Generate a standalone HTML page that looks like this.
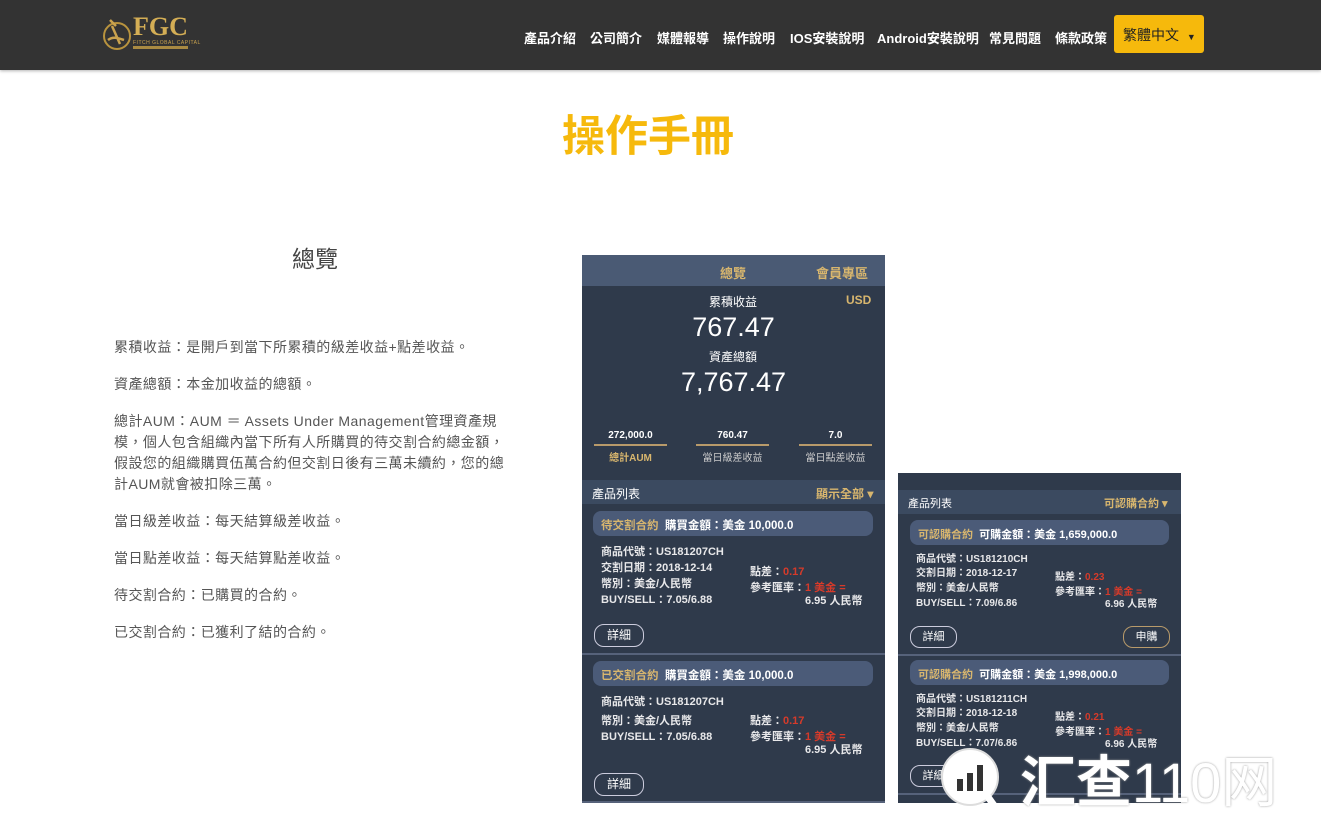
<!DOCTYPE html>
<html><head><meta charset="utf-8"><style>
*{margin:0;padding:0;box-sizing:border-box}
body{width:1321px;height:823px;overflow:hidden;background:#fff;font-family:"Liberation Sans","Noto Sans CJK TC",sans-serif;position:relative}
.a{position:absolute;white-space:nowrap}
nav{position:absolute;left:0;top:0;width:1321px;height:70px;background:#333;box-shadow:0 1px 3px rgba(0,0,0,.3)}
nav .m{position:absolute;top:28px;color:#fff;font-size:13px;font-weight:bold}
.lang{position:absolute;left:1114px;top:15px;width:90px;height:38px;background:#f6b90c;border-radius:3px;color:#222;font-size:14px;padding:10px 0 0 9px}
.p{color:#555;font-size:14px;left:114px;line-height:21px;letter-spacing:.45px}
.ph{position:absolute;background:#2f3a4b;color:#fff;font-weight:bold;overflow:hidden}
.gold{color:#d8b66e}
.red{color:#d63a2a}
.pill{position:absolute;background:#4b5b78;border-radius:8px;height:25px;font-size:11.5px;padding:6px 8px;white-space:nowrap}
.t{position:absolute;font-size:11px;white-space:nowrap;color:#e8e8ea}
.btn{position:absolute;border:1.5px solid #ccd;border-radius:10px;width:50px;height:23px;font-size:12px;text-align:center;line-height:20px;font-weight:normal}
.div{position:absolute;left:0;right:0;height:2px;background:#56627a}
</style></head><body>
<nav>
<svg class="a" style="left:100px;top:14px" width="36" height="40" viewBox="0 0 36 40"><circle cx="17" cy="22" r="13" fill="none" stroke="#b8933e" stroke-width="2"/><path d="M8 26c5-4 10-2 16 0M12 12l8 18M10 6l6 6" stroke="#c9a24e" stroke-width="2.5" fill="none"/></svg>
<div class="a" style="left:133px;top:12px;font-family:'Liberation Serif',serif;font-weight:bold;font-size:26px;color:#d4ae55">FGC</div>
<div class="a" style="left:133px;top:40px;font-size:5px;color:#c9a24e;letter-spacing:.5px">FITCH GLOBAL CAPITAL</div>
<div class="a" style="left:133px;top:46px;width:55px;height:3px;background:#a98a42"></div>
<span class="m" style="left:524px">產品介紹</span>
<span class="m" style="left:590px">公司簡介</span>
<span class="m" style="left:657px">媒體報導</span>
<span class="m" style="left:723px">操作說明</span>
<span class="m" style="left:790px">IOS安裝說明</span>
<span class="m" style="left:877px">Android安裝說明</span>
<span class="m" style="left:989px">常見問題</span>
<span class="m" style="left:1055px">條款政策</span>
<div class="lang">繁體中文 <span style="font-size:9px;margin-left:4px">▼</span></div>
</nav>
<div class="a" style="left:0;width:1296px;text-align:center;top:102px;font-size:43px;font-weight:bold;color:#f6b90c">操作手冊</div>
<div class="a" style="left:292px;top:240px;font-size:23px;color:#444">總覽</div>
<div class="a p" style="top:337px">累積收益：是開戶到當下所累積的級差收益+點差收益。</div>
<div class="a p" style="top:374px">資產總額：本金加收益的總額。</div>
<div class="a p" style="top:411px;white-space:normal;width:402px">總計AUM：AUM ＝ Assets Under Management管理資產規模，個人包含組織內當下所有人所購買的待交割合約總金額，假設您的組織購買伍萬合約但交割日後有三萬未續約，您的總計AUM就會被扣除三萬。</div>
<div class="a p" style="top:511px">當日級差收益：每天結算級差收益。</div>
<div class="a p" style="top:548px">當日點差收益：每天結算點差收益。</div>
<div class="a p" style="top:585px">待交割合約：已購買的合約。</div>
<div class="a p" style="top:622px">已交割合約：已獲利了結的合約。</div>

<div class="ph" style="left:582px;top:255px;width:303px;height:548px">
<div class="a" style="left:0;top:0;width:303px;height:31px;background:#4a5a74"></div>
<div class="a gold" style="left:138px;top:8px;font-size:13px">總覽</div>
<div class="a gold" style="left:234px;top:8px;font-size:13px">會員專區</div>
<div class="a" style="left:127px;top:38px;font-size:12px;font-weight:normal">累積收益</div>
<div class="a gold" style="left:264px;top:38px;font-size:12px">USD</div>
<div class="a" style="left:0;width:303px;text-align:center;top:57px;font-size:27px;font-weight:normal">767.47</div>
<div class="a" style="left:127px;top:93px;font-size:12px;font-weight:normal">資產總額</div>
<div class="a" style="left:0;width:303px;text-align:center;top:112px;font-size:27px;font-weight:normal">7,767.47</div>
<div class="a" style="left:12px;top:175px;width:73px;text-align:center;font-size:10px">272,000.0</div>
<div class="a" style="left:114px;top:175px;width:73px;text-align:center;font-size:10px">760.47</div>
<div class="a" style="left:217px;top:175px;width:73px;text-align:center;font-size:10px">7.0</div>
<div class="a" style="left:12px;top:189px;width:73px;height:2px;background:#b89a6a"></div>
<div class="a" style="left:114px;top:189px;width:73px;height:2px;background:#b89a6a"></div>
<div class="a" style="left:217px;top:189px;width:73px;height:2px;background:#b89a6a"></div>
<div class="a gold" style="left:12px;top:194px;width:73px;text-align:center;font-size:10px">總計AUM</div>
<div class="a" style="left:114px;top:194px;width:73px;text-align:center;font-size:10px;font-weight:normal;color:#ccc">當日級差收益</div>
<div class="a" style="left:217px;top:194px;width:73px;text-align:center;font-size:10px;font-weight:normal;color:#ccc">當日點差收益</div>
<div class="a" style="left:0;top:225px;width:303px;height:24px;background:#3b4a60"></div>
<div class="a" style="left:10px;top:230px;font-size:12px;font-weight:normal">產品列表</div>
<div class="a gold" style="left:234px;top:230px;font-size:12px">顯示全部 ▾</div>
<div class="pill" style="left:11px;top:256px;width:280px"><span class="gold">待交割合約</span>&nbsp; 購買金額：美金 10,000.0</div>
<div class="t" style="left:19px;top:288px">商品代號：US181207CH</div>
<div class="t" style="left:19px;top:304px">交割日期：2018-12-14</div>
<div class="t" style="left:19px;top:320px">幣別：美金/人民幣</div>
<div class="t" style="left:19px;top:336px">BUY/SELL：7.05/6.88</div>
<div class="t" style="left:168px;top:308px">點差：<span class="red">0.17</span></div>
<div class="t" style="left:168px;top:324px">參考匯率：<span class="red">1 美金 =</span></div>
<div class="t red" style="left:223px;top:337px">6.95 人民幣</div>
<div class="btn" style="left:12px;top:369px">詳細</div>
<div class="div" style="top:398px"></div>
<div class="pill" style="left:11px;top:406px;width:280px"><span class="gold">已交割合約</span>&nbsp; 購買金額：美金 10,000.0</div>
<div class="t" style="left:19px;top:438px">商品代號：US181207CH</div>
<div class="t" style="left:19px;top:457px">幣別：美金/人民幣</div>
<div class="t" style="left:19px;top:473px">BUY/SELL：7.05/6.88</div>
<div class="t" style="left:168px;top:457px">點差：<span class="red">0.17</span></div>
<div class="t" style="left:168px;top:473px">參考匯率：<span class="red">1 美金 =</span></div>
<div class="t red" style="left:223px;top:486px">6.95 人民幣</div>
<div class="btn" style="left:12px;top:518px">詳細</div>
<div class="div" style="top:546px"></div>
</div>

<div class="ph" style="left:898px;top:473px;width:283px;height:330px">
<div class="a" style="left:0;top:17px;width:283px;height:24px;background:#3b4a60"></div>
<div class="a" style="left:10px;top:22px;font-size:11px;font-weight:normal">產品列表</div>
<div class="a gold" style="left:206px;top:22px;font-size:11px">可認購合約 ▾</div>
<div class="pill" style="left:12px;top:47px;width:259px;font-size:11px"><span class="gold">可認購合約</span>&nbsp; 可購金額：美金 1,659,000.0</div>
<div class="t" style="left:18px;top:77px;font-size:10px">商品代號：US181210CH</div>
<div class="t" style="left:18px;top:91px;font-size:10px">交割日期：2018-12-17</div>
<div class="t" style="left:18px;top:106px;font-size:10px">幣別：美金/人民幣</div>
<div class="t" style="left:18px;top:121px;font-size:10px">BUY/SELL：7.09/6.86</div>
<div class="t" style="left:157px;top:95px;font-size:10px">點差：<span class="red">0.23</span></div>
<div class="t" style="left:157px;top:110px;font-size:10px">參考匯率：<span class="red">1 美金 =</span></div>
<div class="t red" style="left:207px;top:122px;font-size:10px">6.96 人民幣</div>
<div class="btn" style="left:12px;top:153px;width:47px;height:22px;font-size:11px">詳細</div>
<div class="btn" style="left:225px;top:153px;width:47px;height:22px;font-size:11px;border-color:#b89a6a">申購</div>
<div class="div" style="top:181px"></div>
<div class="pill" style="left:12px;top:187px;width:259px;font-size:11px"><span class="gold">可認購合約</span>&nbsp; 可購金額：美金 1,998,000.0</div>
<div class="t" style="left:18px;top:217px;font-size:10px">商品代號：US181211CH</div>
<div class="t" style="left:18px;top:231px;font-size:10px">交割日期：2018-12-18</div>
<div class="t" style="left:18px;top:246px;font-size:10px">幣別：美金/人民幣</div>
<div class="t" style="left:18px;top:261px;font-size:10px">BUY/SELL：7.07/6.86</div>
<div class="t" style="left:157px;top:235px;font-size:10px">點差：<span class="red">0.21</span></div>
<div class="t" style="left:157px;top:250px;font-size:10px">參考匯率：<span class="red">1 美金 =</span></div>
<div class="t red" style="left:207px;top:262px;font-size:10px">6.96 人民幣</div>
<div class="btn" style="left:12px;top:292px;width:47px;height:22px;font-size:11px">詳細</div>
<div class="div" style="top:320px"></div>
</div>

<svg class="a" style="left:938px;top:745px" width="70" height="72" viewBox="0 0 70 72"><circle cx="32" cy="32" r="28" fill="#fff" stroke="#ddd" stroke-width="2"/><path d="M50 52l10 14" stroke="#fff" stroke-width="7" stroke-linecap="round"/><rect x="19" y="34" width="6" height="12" fill="#333"/><rect x="29" y="28" width="6" height="18" fill="#333"/><rect x="39" y="20" width="6" height="26" fill="#333"/></svg>
<div class="a" style="left:1020px;top:748px;font-size:56px;font-weight:bold;color:#fff;text-shadow:0 0 2px #999;line-height:70px">汇查<span style="font-weight:normal">110网</span></div>
</body></html>
